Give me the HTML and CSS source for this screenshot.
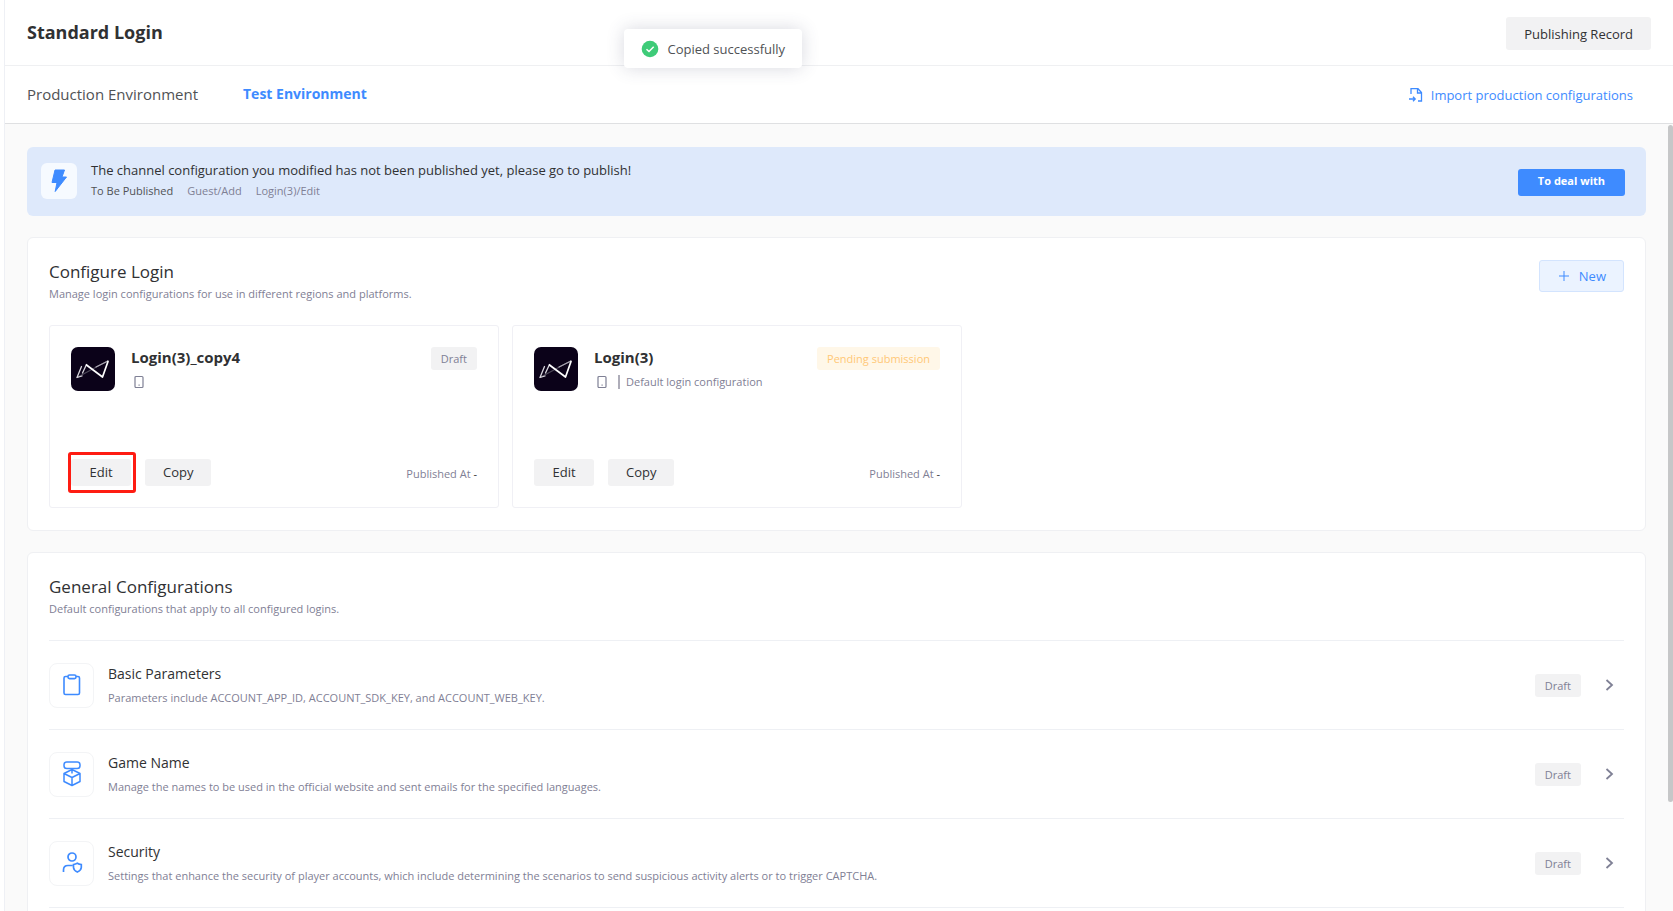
FILE: index.html
```html
<!DOCTYPE html>
<html lang="en">
<head>
<meta charset="utf-8">
<title>Standard Login</title>
<link rel="stylesheet" href="styles.css">
</head>
<body>
<svg class="sprite" aria-hidden="true">
  <symbol id="logo" viewBox="0 0 44 44">
    <rect width="44" height="44" rx="7" fill="#0b0219"/>
    <g fill="none" stroke-linecap="round" stroke-linejoin="round">
      <path d="M6 30.500L36.500 14" stroke="#4d4858" stroke-width="1.200"/>
      <path d="M25 20L37 14" stroke="#aaa6b2" stroke-width="1.200"/>
      <path d="M10.500 19.500L6 30.500L11 29M11.500 26L15.500 17.500" stroke="#d8d6dd" stroke-width="1.300"/>
      <path d="M15.500 18L31.500 30L37 14.500" stroke="#fff" stroke-width="1.700"/>
    </g>
  </symbol>
  <symbol id="phone" viewBox="0 0 10 14">
    <rect x="1" y="1.500" width="8" height="11" rx="1" fill="none" stroke="#7f8095" stroke-width="1.200"/>
    <rect x="4.500" y="9.500" width="1.200" height="1.200" fill="#7f8095"/>
  </symbol>
  <symbol id="chevron" viewBox="0 0 10 14">
    <path d="M1.500 2L7 7L1.500 12" fill="none" stroke="#7f8095" stroke-width="1.800"/>
  </symbol>
</svg>
<main class="page">
  <header class="topbar">
    <h1 class="title">Standard Login</h1>
    <button class="btn btn-record" type="button">Publishing Record</button>
  </header>
  <nav class="tabs">
    <a class="tab" href="#production">Production Environment</a>
    <a class="tab tab-active" href="#test">Test Environment</a>
    <a class="import" href="#import">
      <svg width="14" height="16" viewBox="0 0 14 16" fill="none" stroke="#3e8bff" stroke-width="1.300"><path d="M2 7V1.700H9L12.500 5.500V14H9M8.500 2V6H12.500M0 12H6M4 9.800L6.200 12L4 14.200"/></svg>
      Import production configurations
    </a>
  </nav>
  <div class="content">
    <section class="banner">
      <span class="bolt"><svg width="16" height="23" viewBox="0 0 16 23"><path d="M4 1H13.500L11 8H15.500L4.200 22.500L6 13.500H1Z" fill="#3e8bff" stroke="#3e8bff" stroke-linejoin="round"/></svg></span>
      <div class="banner-text">
        <p class="banner-title">The channel configuration you modified has not been published yet, please go to publish!</p>
        <p class="banner-items"><span class="strong">To Be Published</span><span>Guest/Add</span><span>Login(3)/Edit</span></p>
      </div>
      <button class="btn btn-deal" type="button">To deal with</button>
    </section>

    <section class="panel">
      <div class="panel-head">
        <div>
          <h2 class="heading">Configure Login</h2>
          <p class="sub">Manage login configurations for use in different regions and platforms.</p>
        </div>
        <button class="btn btn-new" type="button"><svg width="10" height="10" viewBox="0 0 10 10"><path d="M5 0V10M0 5H10" stroke="#3e8bff"/></svg>New</button>
      </div>
      <div class="logins">
        <article class="login">
          <div class="login-top">
            <svg class="logo"><use href="#logo"/></svg>
            <div class="login-info">
              <h3 class="login-name">Login(3)_copy4</h3>
              <p class="login-meta"><svg class="phone"><use href="#phone"/></svg></p>
            </div>
            <span class="tag">Draft</span>
          </div>
          <div class="login-foot">
            <button class="btn btn-small marked" type="button">Edit</button>
            <button class="btn btn-small" type="button">Copy</button>
            <span class="published">Published At <b class="dash">-</b></span>
          </div>
        </article>
        <article class="login">
          <div class="login-top">
            <svg class="logo"><use href="#logo"/></svg>
            <div class="login-info">
              <h3 class="login-name">Login(3)</h3>
              <p class="login-meta"><svg class="phone"><use href="#phone"/></svg><span class="default">Default login configuration</span></p>
            </div>
            <span class="tag tag-pending">Pending submission</span>
          </div>
          <div class="login-foot">
            <button class="btn btn-small" type="button">Edit</button>
            <button class="btn btn-small" type="button">Copy</button>
            <span class="published">Published At <b class="dash">-</b></span>
          </div>
        </article>
      </div>
    </section>

    <section class="panel">
      <div class="panel-head">
        <div>
          <h2 class="heading">General Configurations</h2>
          <p class="sub">Default configurations that apply to all configured logins.</p>
        </div>
      </div>
      <ul class="rows">
        <li><a class="row" href="#basic">
          <span class="row-icon"><svg width="22" height="26" viewBox="0 0 22 26" fill="none" stroke="#3e8bff" stroke-width="1.600"><path d="M7 4.500H4.500Q3 4.500 3 6V21Q3 22.500 4.500 22.500H17Q18.500 22.500 18.500 21V6Q18.500 4.500 17 4.500H15"/><rect x="7" y="3" width="8" height="3.600" rx="1.500"/></svg></span>
          <span class="row-text"><span class="row-title">Basic Parameters</span><span class="sub">Parameters include ACCOUNT_APP_ID, ACCOUNT_SDK_KEY, and ACCOUNT_WEB_KEY.</span></span>
          <span class="tag">Draft</span><svg class="chevron"><use href="#chevron"/></svg>
        </a></li>
        <li><a class="row" href="#game">
          <span class="row-icon"><svg width="22" height="26" viewBox="0 0 22 26" fill="none" stroke="#3e8bff" stroke-width="1.500" stroke-linejoin="round"><rect x="3" y="1" width="16" height="6.500" rx="2.800"/><path d="M11 8.500V12.500M3 12.500V20.500L11 24.500L19 20.500V12.500L11 8.500ZM3 12.500L11 16.500L19 12.500M11 16.500V24.500"/></svg></span>
          <span class="row-text"><span class="row-title">Game Name</span><span class="sub">Manage the names to be used in the official website and sent emails for the specified languages.</span></span>
          <span class="tag">Draft</span><svg class="chevron"><use href="#chevron"/></svg>
        </a></li>
        <li><a class="row" href="#security">
          <span class="row-icon"><svg width="22" height="26" viewBox="0 0 22 26" fill="none" stroke="#3e8bff" stroke-width="1.700"><circle cx="11" cy="7" r="4"/><path d="M2.500 22V20Q2.500 15.500 7 15.500H11.500M12.500 14.500Q14.500 14.300 16.300 13.300Q18 14.300 20.300 14.500V17.500Q20 20.500 16.300 22Q12.800 20.500 12.500 17.500Z"/></svg></span>
          <span class="row-text"><span class="row-title">Security</span><span class="sub">Settings that enhance the security of player accounts, which include determining the scenarios to send suspicious activity alerts or to trigger CAPTCHA.</span></span>
          <span class="tag">Draft</span><svg class="chevron"><use href="#chevron"/></svg>
        </a></li>
        <li class="row-end"></li>
      </ul>
    </section>
    <span class="scroll-thumb"></span>
  </div>
</main>
<div class="toast" role="status">
  <svg width="18" height="18" viewBox="0 0 18 18"><circle cx="9" cy="9" r="8.300" fill="#3ecb78"/><path d="M5.500 9.200L8 11.500L12.700 6.800" fill="none" stroke="#fff" stroke-width="1.500"/></svg>
  Copied successfully
</div>
</body>
</html>
```
FILE: styles.css
```css
* { box-sizing: border-box; }

body {
  margin: 0;
  background: #fff;
  color: #303133;
  font-family: "Open Sans", "Noto Sans", sans-serif;
  font-size: 13px;
  line-height: 20px;
}

h1, h2, h3, p, ul { margin: 0; padding: 0; font-weight: 400; }
ul { list-style: none; }
a { color: inherit; text-decoration: none; }
.sprite { position: absolute; width: 0; height: 0; }

.page {
  display: flex;
  flex-direction: column;
  height: 100vh;
  margin-left: 4px;
  border-left: 1px solid #eef0f5;
  overflow: hidden;
}

.topbar {
  display: flex;
  align-items: flex-start;
  justify-content: space-between;
  flex: none;
  height: 66px;
  padding: 17px 22px 0;
  border-bottom: 1px solid #eff0f2;
}
.title { font-size: 18px; font-weight: 700; line-height: 30px; }

.btn {
  border: 0;
  border-radius: 3px;
  background: #f2f2f3;
  color: #303133;
  font: inherit;
  cursor: pointer;
}
.btn-record { height: 33px; padding: 0 18px; }

.tabs {
  display: flex;
  align-items: center;
  flex: none;
  gap: 45px;
  height: 58px;
  padding: 0 40px 0 22px;
  border-bottom: 1px solid #dfe0e2;
}
.tab { padding-bottom: 2px; color: #505255; font-size: 15px; }
.tab-active { color: #3e8bff; font-size: 14px; font-weight: 700; }
.import {
  display: flex;
  align-items: center;
  gap: 8px;
  margin-left: auto;
  color: #3e8bff;
}

.content {
  position: relative;
  flex: 1;
  min-height: 0;
  padding: 23px 27px 0 22px;
  background: #fafafa;
  overflow: hidden;
}
.scroll-thumb {
  position: absolute;
  top: 1px;
  right: 0;
  width: 5px;
  height: 86%;
  border-radius: 3px;
  background: #c6c7c8;
}

.banner {
  display: flex;
  align-items: center;
  min-height: 69px;
  padding: 0 21px 2px 14px;
  border-radius: 6px;
  background: #dee9fb;
}
.bolt {
  display: grid;
  place-items: center;
  width: 36px;
  height: 36px;
  margin-right: 14px;
  border-radius: 6px;
  background: #f6faff;
}
.banner-text { flex: 1; }
.banner-title { line-height: 21px; }
.banner-items { display: flex; gap: 14px; color: #7f8095; font-size: 11px; }
.strong { color: #505255; }
.btn-deal {
  height: 27px;
  margin-top: 4px;
  padding: 0 20px 3px;
  background: #3e8bff;
  color: #fff;
  font-size: 11px;
  font-weight: 700;
}

.panel {
  margin-top: 21px;
  padding: 21px 21px 22px;
  border: 1px solid #eff0f3;
  border-radius: 6px;
  background: #fff;
}
.panel-head { display: flex; align-items: flex-start; justify-content: space-between; }
.heading { font-size: 17px; line-height: 25px; }
.sub { color: #7f8095; font-size: 11px; line-height: 20px; }
.btn-new {
  display: flex;
  align-items: center;
  gap: 10px;
  height: 32px;
  margin-top: 1px;
  padding: 0 17px 0 19px;
  border: 1px solid #d3e4fe;
  background: #ebf3ff;
  color: #3e8bff;
}

.logins { display: flex; flex-wrap: wrap; gap: 13px; margin-top: 21px; }
.login {
  display: flex;
  flex-direction: column;
  justify-content: space-between;
  flex: 0 1 450px;
  min-height: 183px;
  padding: 21px;
  border: 1px solid #f0f0f5;
  border-radius: 3px;
}
.login-top { display: flex; align-items: flex-start; }
.logo { width: 44px; height: 44px; margin-right: 16px; }
.login-info { flex: 1; }
.login-name { font-size: 15px; font-weight: 700; line-height: 21px; }
.login-meta { display: flex; align-items: center; min-height: 28px; padding-left: 3px; }
.phone { width: 10px; height: 14px; }
.default {
  margin-left: 11px;
  padding-left: 6px;
  border-left: 2px solid #aeadb9;
  color: #7f8095;
  font-size: 11px;
  line-height: 14px;
}
.tag {
  padding: 0 10px;
  border-radius: 3px;
  background: #f2f2f3;
  color: #7f8095;
  font-size: 11px;
  line-height: 23px;
}
.tag-pending { background: #fff7e8; color: #ffc877; }

.login-foot { display: flex; align-items: center; gap: 14px; }
.btn-small { min-width: 60px; height: 27px; padding: 0 18px 2px; }
.marked { position: relative; }
.marked::after {
  content: "";
  position: absolute;
  inset: -7px -5px -7px -3px;
  border: 3px solid #fe1c12;
  border-radius: 3px;
}
.published { margin-left: auto; padding-top: 2px; color: #7f8095; font-size: 11px; }
.dash { color: #303133; font-weight: 400; }

.rows { margin-top: 21px; }
.row {
  display: flex;
  align-items: center;
  height: 89px;
  border-top: 1px solid #eef0f4;
}
.row-end { border-top: 1px solid #eef0f4; }
.row-icon {
  display: grid;
  place-items: center;
  width: 45px;
  height: 45px;
  margin-right: 14px;
  border: 1px solid #f3f4f6;
  border-radius: 8px;
}
.row-text { display: flex; flex: 1; flex-direction: column; gap: 3px; }
.row-title { font-size: 14px; line-height: 22px; }
.chevron { width: 10px; height: 14px; margin: 0 9px 0 24px; }

.toast {
  position: absolute;
  top: 29px;
  left: 50%;
  display: flex;
  align-items: center;
  gap: 9px;
  height: 39px;
  margin-left: -213px;
  padding: 0 17px;
  border-radius: 4px;
  background: #fff;
  box-shadow: 0 0 18px rgba(60, 64, 100, 0.2);
  color: #505255;
}
```
